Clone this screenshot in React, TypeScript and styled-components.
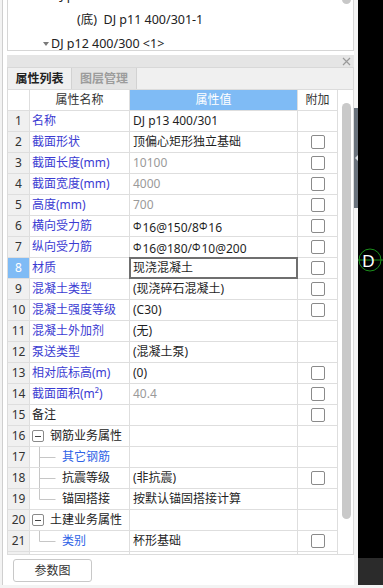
import React from 'react';
import styled, { createGlobalStyle, css } from 'styled-components';

const Global = createGlobalStyle`
  html, body { margin: 0; padding: 0; background: #f3f3f3; }
  body {
    font-family: "Noto Sans", "Noto Sans CJK SC", sans-serif;
    font-size: 12px;
    color: #1f1f1f;
  }
  * { box-sizing: border-box; }
`;

const Screen = styled.div`
  width: 383px;
  height: 588px;
  display: flex;
  flex-direction: column;
  overflow: hidden;
  background: #f3f3f3;
`;

const Main = styled.div`
  display: flex;
  height: 585px;
`;

const Panel = styled.div`
  width: 352px;
  margin-left: 2px;
  border-left: 1px solid #cfcfcf;
  padding-left: 4px;
  background: #fff;
  display: flex;
  flex-direction: column;
`;

const TreeBox = styled.div`
  position: relative;
  height: 51px;
  border: 1px solid #d6d6d6;
  border-top: none;
  overflow: hidden;
  background: #fff;
`;

const TreeList = styled.div`
  margin-top: -16px;
`;

const TreeRow = styled.div<{ $indent: number }>`
  height: 24px;
  line-height: 24px;
  padding-left: ${p => p.$indent}px;
  font-size: 12.5px;
  color: #222;
  white-space: nowrap;
  display: flex;
  align-items: center;
`;

const Caret = styled.span`
  width: 9px;
  display: flex;
  align-items: center;
  &::before {
    content: '';
    width: 0;
    height: 0;
    margin-left: 1px;
    border-left: 3px solid transparent;
    border-right: 3px solid transparent;
    border-top: 4px solid #7a7a7a;
  }
`;

const TreeThumb = styled.div`
  position: absolute;
  right: 2px;
  top: -10px;
  width: 9px;
  height: 14px;
  border-radius: 4.5px;
  background: #c8c8c8;
`;

const TitleBar = styled.div`
  margin-top: 4px;
  height: 12px;
  background: #e5e5e5;
  display: flex;
  justify-content: flex-end;
  align-items: center;
  padding-right: 3px;
`;

const TabBar = styled.div`
  height: 22px;
  background: #f0f0f0;
  border-top: 1px solid #d8d8d8;
  border-left: 1px solid #d8d8d8;
  border-right: 1px solid #d8d8d8;
  display: flex;
`;

const Tab = styled.div<{ $active?: boolean }>`
  width: ${p => (p.$active ? 64 : 65)}px;
  height: 21px;
  line-height: 21px;
  text-align: center;
  font-weight: 700;
  font-size: 12px;
  border-right: 1px solid #d2d2d2;
  ${p =>
    p.$active
      ? css`
          background: #f0f0f0;
          color: #222;
        `
      : css`
          background: #e4e4e4;
          color: #9c9c9c;
        `}
`;

const Grid = styled.div`
  height: 466px;
  border: 1px solid #dcdcdc;
  display: flex;
  background: #fff;
`;

const Table = styled.div`
  width: 330px;
  height: 464px;
  overflow: hidden;
  display: grid;
  grid-template-columns: 22px 100px 168px 40px;
  grid-auto-rows: 21px;
`;

const Cell = styled.div`
  border-right: 1px solid #dedede;
  border-bottom: 1px solid #dedede;
  height: 21px;
  line-height: 20px;
  white-space: nowrap;
  overflow: hidden;
`;

const HeadCell = styled(Cell)<{ $accent?: boolean }>`
  text-align: center;
  color: ${p => (p.$accent ? '#fff' : '#333')};
  background: ${p => (p.$accent ? '#7fbbf5' : '#fff')};
`;

const NumCell = styled(Cell)<{ $selected?: boolean }>`
  text-align: center;
  background: ${p => (p.$selected ? '#7fbbf5' : '#f0f0f0')};
  color: ${p => (p.$selected ? '#fff' : '#333')};
`;

type Tone = 'blue' | 'child' | 'black';
const toneColor: Record<Tone, string> = {
  blue: '#3b3bd2',
  child: '#2f63e6',
  black: '#222',
};

const NameCell = styled(Cell)<{ $tone: Tone }>`
  padding-left: 2px;
  color: ${p => toneColor[p.$tone]};
  display: flex;
  align-items: center;
`;

const ValueCell = styled(Cell)<{ $muted?: boolean; $editing?: boolean }>`
  position: relative;
  padding-left: 3px;
  color: ${p => (p.$muted ? '#9a9a9a' : '#1f1f1f')};
  overflow: visible;
  ${p =>
    p.$editing &&
    css`
      &::after {
        content: '';
        position: absolute;
        top: -1px;
        left: -1px;
        right: -1px;
        bottom: -1px;
        border: 2px solid #6f6f6f;
      }
    `}
`;

const CheckCell = styled(Cell)`
  display: flex;
  align-items: center;
  justify-content: center;
`;

const Box = styled.span`
  width: 14px;
  height: 14px;
  border: 1px solid #8a8a8a;
  border-radius: 2px;
  background: #fff;
`;

const Toggle = styled.span`
  width: 12px;
  height: 12px;
  border: 1px solid #8a8a8a;
  border-radius: 2px;
  margin-right: 6px;
  display: flex;
  align-items: center;
  justify-content: center;
  &::before {
    content: '';
    width: 6px;
    height: 1px;
    background: #444;
  }
`;

const Connector = styled.svg`
  width: 24px;
  height: 20px;
  margin-right: 6px;
  flex: none;
`;

const Rebar = styled.span`
  font-size: 10px;
  vertical-align: 2px;
  margin-right: 1px;
`;

const ScrollTrack = styled.div`
  width: 15px;
  padding-left: 4px;
  padding-top: 13px;
`;

const Thumb = styled.div`
  width: 9px;
  height: 416px;
  border-radius: 4.5px;
  background: #c9c9c9;
`;

const Footer = styled.div`
  padding: 4px 0 0 6px;
`;

const Button = styled.button`
  width: 79px;
  height: 23px;
  border: 1px solid #c8c8c8;
  border-radius: 3px;
  background: #fff;
  font-family: inherit;
  font-size: 12px;
  line-height: 21px;
  color: #333;
  padding: 0;
`;

const Splitter = styled.div`
  width: 4px;
  background: #f4f4f4;
  display: flex;
  flex-direction: column;
`;

const SplitHandle = styled.div`
  margin-top: 108px;
  height: 100px;
  background: #6a737d;
  display: flex;
  align-items: center;
  justify-content: center;
`;

const SplitArrow = styled.span`
  width: 0;
  height: 0;
  border-top: 3px solid transparent;
  border-bottom: 3px solid transparent;
  border-right: 3px solid #d8dde2;
`;

const Canvas = styled.div`
  flex: 1;
  display: flex;
  flex-direction: column;
`;

const Viewport = styled.div`
  position: relative;
  flex: 1;
  background: #000;
`;

const CanvasBar = styled.div`
  height: 27px;
  background: #2b2b2b;
`;

const Marker = styled.svg`
  position: absolute;
  left: 0;
  top: 247px;
  width: 25px;
  height: 26px;
`;

const BottomStrip = styled.div`
  height: 3px;
  background: #f3f3f3;
`;

type Row = {
  name: string;
  tone: Tone;
  value?: React.ReactNode;
  muted?: boolean;
  check?: boolean;
  group?: boolean;
  branch?: 'mid' | 'end';
};

const R = () => <Rebar>Φ</Rebar>;

const rows: Row[] = [
  { name: '名称', tone: 'blue', value: 'DJ p13 400/301' },
  { name: '截面形状', tone: 'blue', value: '顶偏心矩形独立基础', check: true },
  { name: '截面长度(mm)', tone: 'blue', value: '10100', muted: true, check: true },
  { name: '截面宽度(mm)', tone: 'blue', value: '4000', muted: true, check: true },
  { name: '高度(mm)', tone: 'blue', value: '700', muted: true, check: true },
  { name: '横向受力筋', tone: 'blue', value: <><R />16@150/8<R />16</>, check: true },
  { name: '纵向受力筋', tone: 'blue', value: <><R />16@180/<R />10@200</>, check: true },
  { name: '材质', tone: 'blue', value: '现浇混凝土', check: true },
  { name: '混凝土类型', tone: 'blue', value: '(现浇碎石混凝土)', check: true },
  { name: '混凝土强度等级', tone: 'blue', value: '(C30)', check: true },
  { name: '混凝土外加剂', tone: 'blue', value: '(无)' },
  { name: '泵送类型', tone: 'blue', value: '(混凝土泵)' },
  { name: '相对底标高(m)', tone: 'blue', value: '(0)', check: true },
  { name: '截面面积(m²)', tone: 'blue', value: '40.4', muted: true, check: true },
  { name: '备注', tone: 'black', check: true },
  { name: '钢筋业务属性', tone: 'black', group: true },
  { name: '其它钢筋', tone: 'child', branch: 'mid' },
  { name: '抗震等级', tone: 'black', value: '(非抗震)', check: true, branch: 'mid' },
  { name: '锚固搭接', tone: 'black', value: '按默认锚固搭接计算', branch: 'end' },
  { name: '土建业务属性', tone: 'black', group: true },
  { name: '类别', tone: 'child', value: '杯形基础', check: true, branch: 'end' },
];

const Branch: React.FC<{ kind: 'mid' | 'end' }> = ({ kind }) => (
  <Connector viewBox="0 0 24 20">
    <line x1="7.5" y1="0" x2="7.5" y2={kind === 'mid' ? 20 : 10.5} stroke="#c6c6c6" strokeWidth="1" />
    <line x1="7.5" y1="10.5" x2="23.5" y2="10.5" stroke="#c6c6c6" strokeWidth="1" />
  </Connector>
);

export default function App() {
  return (
    <Screen>
      <Global />
      <Main>
        <Panel>
          <TreeBox>
            <TreeList>
              <TreeRow $indent={43}>DJ p11 400/301-1</TreeRow>
              <TreeRow $indent={69}>(底)&nbsp; DJ p11 400/301-1</TreeRow>
              <TreeRow $indent={34}>
                <Caret />DJ p12 400/300 &lt;1&gt;
              </TreeRow>
            </TreeList>
            <TreeThumb />
          </TreeBox>
          <TitleBar>
            <svg width="9" height="9" viewBox="0 0 9 9">
              <path d="M1 1L8 8M8 1L1 8" stroke="#9a9a9a" strokeWidth="1.2" />
            </svg>
          </TitleBar>
          <TabBar>
            <Tab $active>属性列表</Tab>
            <Tab>图层管理</Tab>
          </TabBar>
          <Grid>
            <Table>
              <HeadCell />
              <HeadCell>属性名称</HeadCell>
              <HeadCell $accent>属性值</HeadCell>
              <HeadCell>附加</HeadCell>
              {rows.map((r, i) => (
                <React.Fragment key={i}>
                  <NumCell $selected={i === 7}>{i + 1}</NumCell>
                  <NameCell $tone={r.tone}>
                    {r.group && <Toggle />}
                    {r.branch && <Branch kind={r.branch} />}
                    {r.name}
                  </NameCell>
                  <ValueCell $muted={r.muted} $editing={i === 7}>
                    {r.value}
                  </ValueCell>
                  <CheckCell>{r.check && <Box />}</CheckCell>
                </React.Fragment>
              ))}
              <NumCell />
              <NameCell $tone="blue" />
              <ValueCell />
              <CheckCell />
            </Table>
            <ScrollTrack>
              <Thumb />
            </ScrollTrack>
          </Grid>
          <Footer>
            <Button>参数图</Button>
          </Footer>
        </Panel>
        <Splitter>
          <SplitHandle>
            <SplitArrow />
          </SplitHandle>
        </Splitter>
        <Canvas>
          <Viewport>
            <Marker viewBox="0 0 25 26">
              <line x1="0" y1="13" x2="25" y2="13" stroke="#1c8f1c" strokeWidth="1" />
              <circle cx="12" cy="13" r="11" fill="none" stroke="#1c8f1c" strokeWidth="1" />
              <text
                x="10.5"
                y="19.5"
                textAnchor="middle"
                fill="#fff"
                fontFamily="Liberation Sans, Arial, sans-serif"
                fontSize="17"
              >
                D
              </text>
            </Marker>
          </Viewport>
          <CanvasBar />
        </Canvas>
      </Main>
      <BottomStrip />
    </Screen>
  );
}
